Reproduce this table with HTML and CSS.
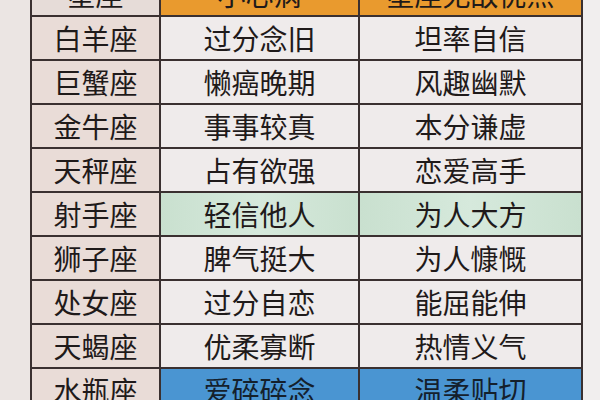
FILE: index.html
```html
<!DOCTYPE html>
<html lang="zh">
<head>
<meta charset="utf-8">
<link rel="stylesheet" href="styles.css">
</head>
<body>
<div class="page">
<table class="zodiac">
  <colgroup>
    <col class="c1"><col class="c2"><col class="c3">
  </colgroup>
  <tr class="head"><td class="name">星座</td><td>小心病</td><td>星座无敌优点</td></tr>
  <tr><td class="name">白羊座</td><td>过分念旧</td><td>坦率自信</td></tr>
  <tr><td class="name">巨蟹座</td><td>懒癌晚期</td><td>风趣幽默</td></tr>
  <tr><td class="name">金牛座</td><td>事事较真</td><td>本分谦虚</td></tr>
  <tr><td class="name">天秤座</td><td>占有欲强</td><td>恋爱高手</td></tr>
  <tr class="green"><td class="name">射手座</td><td>轻信他人</td><td>为人大方</td></tr>
  <tr><td class="name">狮子座</td><td>脾气挺大</td><td>为人慷慨</td></tr>
  <tr><td class="name">处女座</td><td>过分自恋</td><td>能屈能伸</td></tr>
  <tr><td class="name">天蝎座</td><td>优柔寡断</td><td>热情义气</td></tr>
  <tr class="blue"><td class="name">水瓶座</td><td>爱碎碎念</td><td>温柔贴切</td></tr>
</table>
</div>
</body>
</html>
```
FILE: styles.css
```css
html, body {
  margin: 0;
  padding: 0;
  background: #ebe6e5;
  overflow: hidden;
}
.page {
  width: 600px;
  height: 400px;
  overflow: hidden;
  background: linear-gradient(to right, #ebe5e3 0, #ebe5e3 580px, #f1eeee 582px);
}
.zodiac {
  margin: -29px 0 0 30px;
  width: 551px;
  table-layout: fixed;
  border-collapse: collapse;
  font-family: "Noto Sans CJK SC", "Noto Sans", sans-serif;
  font-size: 28px;
  color: #1f1a1a;
}
.c1 { width: 129px; }
.c2 { width: 199px; }
.c3 { width: 223px; }
.zodiac td {
  border: 2px solid #3a3030;
  height: 42px;
  padding: 0;
  text-align: center;
  vertical-align: middle;
  line-height: 40px;
  background: #efebeb;
}
.zodiac td.name {
  background: #e9dcd7;
}
.head td {
  background: #e99a2e;
}
.head td.name {
  background: #e6dcd8;
}
.green td {
  background: linear-gradient(to right, #c9e0cf, #d6e9dc 50%, #c9e0cf);
}
.green td.name {
  background: #e9dcd7;
}
.blue td {
  background: #4a95d2;
  color: #14202c;
}
.blue td.name {
  background: #e9dcd7;
  color: #1f1a1a;
}
```
